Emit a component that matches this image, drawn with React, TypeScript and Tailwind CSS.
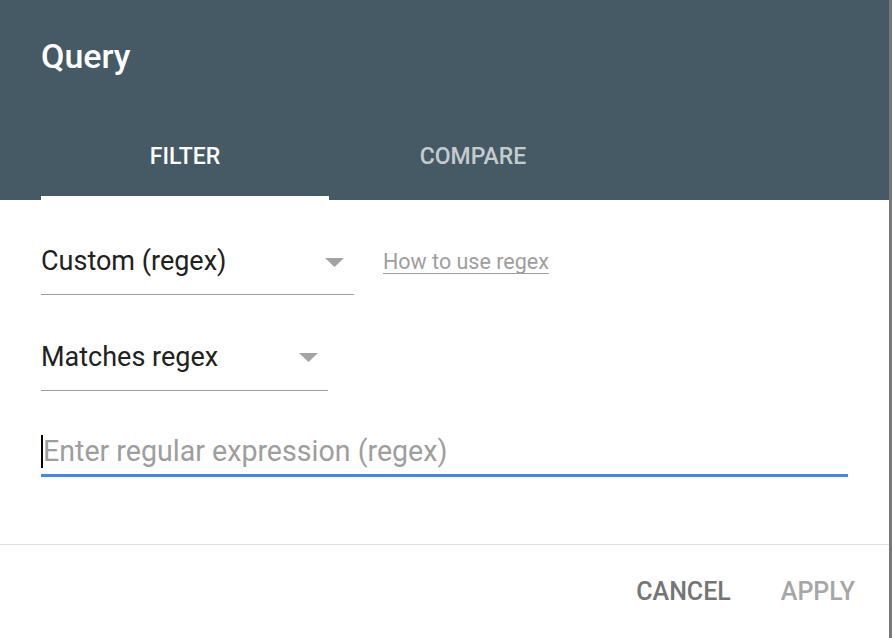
import React from "react";

function Caret({ className }: { className: string }) {
  return (
    <svg className={className} width="19" height="9" viewBox="0 0 19 9">
      <path d="M0 0 L19 0 L9.5 9 Z" fill="#a3a3a3" />
    </svg>
  );
}

export default function App() {
  return (
    <div className="flex w-[892px] h-[638px] font-['Roboto',sans-serif] bg-[#777777]">
      <div className="w-[889px] h-[638px] bg-white flex flex-col">
        {/* header */}
        <div className="h-[200px] bg-[#455a64] flex flex-col px-[41px]">
          <div className="pt-[36px] text-[34px] leading-[40px] font-medium text-white">Query</div>
          <div className="mt-auto flex">
            <div className="w-[288px] flex justify-center pb-[26px] border-b-4 border-white text-[23px] leading-[26px] font-medium text-white">
              FILTER
            </div>
            <div className="w-[288px] flex justify-center pb-[26px] border-b-4 border-transparent text-[23px] leading-[26px] font-medium text-white/70">
              COMPARE
            </div>
          </div>
        </div>

        {/* body */}
        <div className="px-[41px] pt-[46px] flex flex-col">
          <div className="flex items-start">
            <div className="w-[313px] flex items-center justify-between pr-[10px] pb-[18px] border-b border-[#9e9e9e]">
              <span className="text-[27px] leading-[30px] text-[#212121]">Custom (regex)</span>
              <Caret className="mt-[3px]" />
            </div>
            <span className="ml-[29px] mt-[3px] text-[21.5px] leading-[25px] text-[#9e9e9e] underline underline-offset-[4px] decoration-1">
              How to use regex
            </span>
          </div>

          <div className="mt-[47px] w-[287px] flex items-center justify-between pr-[10px] pb-[18px] border-b border-[#9e9e9e]">
            <span className="text-[27px] leading-[30px] text-[#212121]">Matches regex</span>
            <Caret className="" />
          </div>

          <div className="mt-[44px] flex items-center h-[33px] box-content pb-[6px] border-b-[3px] border-[#4285f4]">
            <div className="w-[2px] h-[33px] bg-black" />
            <span className="text-[28.6px] leading-[33px] text-[#9e9e9e]">Enter regular expression (regex)</span>
          </div>
        </div>

        <div className="mt-[67px] h-px bg-[#e0e0e0]" />

        <div className="flex justify-end gap-[50px] pt-[32px] pr-[34px]">
          <span className="text-[25px] leading-[29px] font-medium text-[#757575]">CANCEL</span>
          <span className="text-[25px] leading-[29px] font-medium text-[#a6a6a6]">APPLY</span>
        </div>
      </div>
      <div className="w-[3px] h-[638px] bg-[#777777]" />
    </div>
  );
}
